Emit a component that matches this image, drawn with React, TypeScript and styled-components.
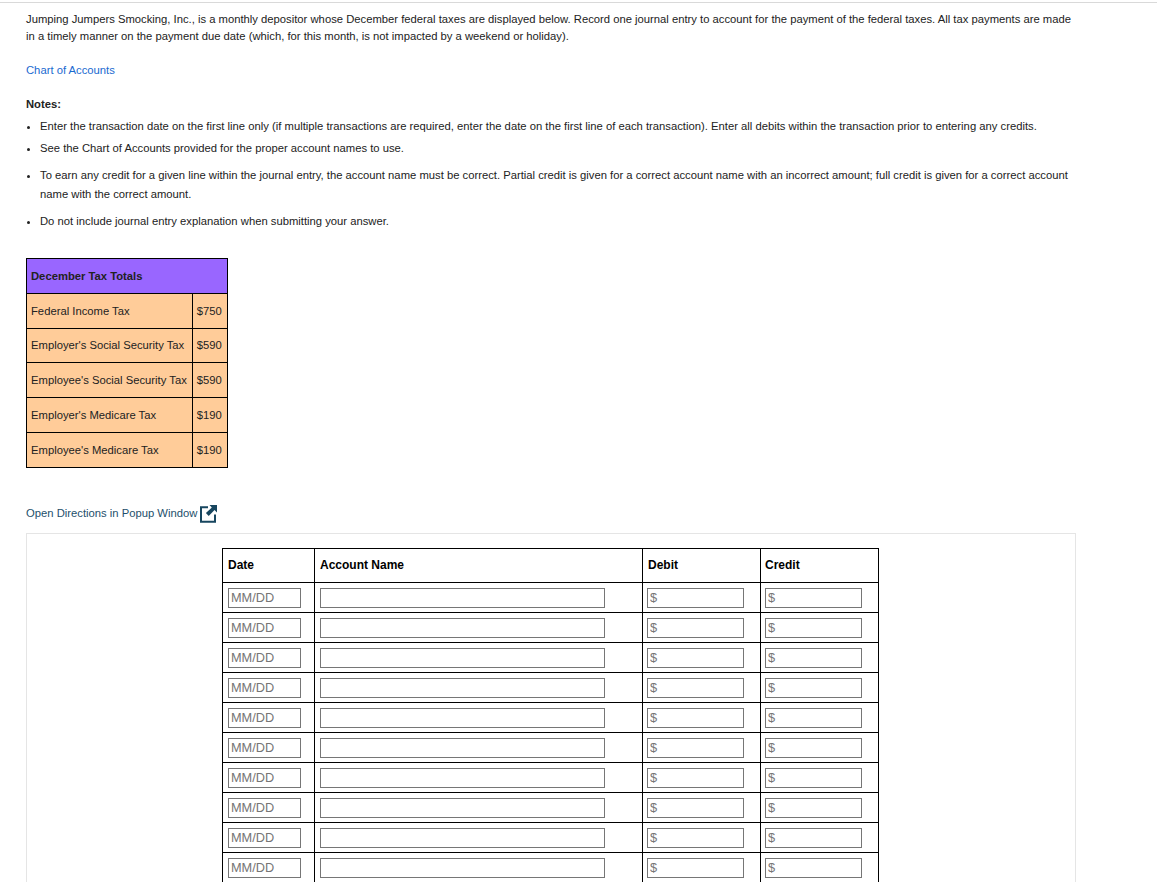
import React from 'react'
import styled, { createGlobalStyle } from 'styled-components'

const taxes = [
  { name: 'Federal Income Tax', amount: '$750' },
  { name: "Employer's Social Security Tax", amount: '$590' },
  { name: "Employee's Social Security Tax", amount: '$590' },
  { name: "Employer's Medicare Tax", amount: '$190' },
  { name: "Employee's Medicare Tax", amount: '$190' },
]

const rows = Array.from({ length: 12 }, (_, i) => i)

const PopupIcon = () => (
  <svg width="17" height="19" viewBox="0 0 17 19" aria-hidden="true">
    <path d="M8 3.2H1v14.6h14V10.5" fill="none" stroke="#17465f" strokeWidth="2" />
    <path d="M9.5 1H17v7.5l-2.5-2.5-5.8 5.9-2.8-2.8L11.8 3.6z" fill="#17465f" />
  </svg>
)

const App = () => {
  return (
    <Page>
      <GlobalStyle />
      <Paragraph>
        Jumping Jumpers Smocking, Inc., is a monthly depositor whose December federal taxes are
        displayed below. Record one journal entry to account for the payment of the federal taxes.
        All tax payments are made in a timely manner on the payment due date (which, for this month,
        is not impacted by a weekend or holiday).
      </Paragraph>
      <ChartLink href="#">Chart of Accounts</ChartLink>
      <NotesTitle>Notes:</NotesTitle>
      <Notes>
        <Note $gap={5} $lead={17}>
          Enter the transaction date on the first line only (if multiple transactions are required,
          enter the date on the first line of each transaction). Enter all debits within the
          transaction prior to entering any credits.
        </Note>
        <Note $gap={5} $lead={17}>
          See the Chart of Accounts provided for the proper account names to use.
        </Note>
        <Note $gap={9} $lead={19}>
          To earn any credit for a given line within the journal entry, the account name must be
          correct. Partial credit is given for a correct account name with an incorrect amount; full
          credit is given for a correct account name with the correct amount.
        </Note>
        <Note $gap={9} $lead={17}>
          Do not include journal entry explanation when submitting your answer.
        </Note>
      </Notes>
      <TaxTable>
        <tbody>
          <tr>
            <TaxHead colSpan={2}>December Tax Totals</TaxHead>
          </tr>
          {taxes.map((t) => (
            <tr key={t.name}>
              <TaxCell>{t.name}</TaxCell>
              <TaxCell>{t.amount}</TaxCell>
            </tr>
          ))}
        </tbody>
      </TaxTable>
      <PopupLink href="#">
        Open Directions in Popup Window
        <PopupIcon />
      </PopupLink>
      <Card>
        <Journal>
          <thead>
            <tr>
              <JournalHead $width={92} $inset={5}>Date</JournalHead>
              <JournalHead $width={328} $inset={5}>Account Name</JournalHead>
              <JournalHead $width={118} $inset={5}>Debit</JournalHead>
              <JournalHead $width={118} $inset={4}>Credit</JournalHead>
            </tr>
          </thead>
          <tbody>
            {rows.map((r) => (
              <tr key={r}>
                <JournalCell $inset={5}>
                  <Field $width={73} placeholder="MM/DD" />
                </JournalCell>
                <JournalCell $inset={5}>
                  <Field $width={285} />
                </JournalCell>
                <JournalCell $inset={4}>
                  <Field $width={97} placeholder="$" />
                </JournalCell>
                <JournalCell $inset={4}>
                  <Field $width={97} placeholder="$" />
                </JournalCell>
              </tr>
            ))}
          </tbody>
        </Journal>
      </Card>
    </Page>
  )
}

export default App

const GlobalStyle = createGlobalStyle`
  html, body {
    margin: 0;
    height: 882px;
    overflow: hidden;
    background: #fff;
  }
`

const Page = styled.div`
  width: 1157px;
  box-sizing: border-box;
  border-top: 1px solid #d9d9d9;
  margin-top: 2px;
  padding: 8px 81px 0 26px;
  font-family: 'Liberation Sans', Arial, sans-serif;
  font-size: 11.25px;
  line-height: 17px;
  color: #222;
`

const Paragraph = styled.p`
  margin: 0;
`

const ChartLink = styled.a`
  display: block;
  margin-top: 17px;
  color: #1a6ad0;
  text-decoration: none;
`

const NotesTitle = styled.div`
  margin-top: 17px;
  font-weight: bold;
`

const Notes = styled.ul`
  margin: 5px 0 0;
  padding: 0 0 0 14px;
`

const Note = styled.li<{ $gap: number; $lead: number }>`
  margin-top: ${({ $gap }) => $gap}px;
  line-height: ${({ $lead }) => $lead}px;
`

const TaxTable = styled.table`
  margin-top: 28px;
  border-collapse: collapse;
  background: #ffcc99;
`

const TaxHead = styled.td`
  height: 34.8px;
  box-sizing: border-box;
  padding: 1px 4px 0;
  border: 1px solid #000;
  background: #9966ff;
  font-weight: bold;
`

const TaxCell = styled.td`
  height: 34.8px;
  box-sizing: border-box;
  padding: 1px 5px 0 4px;
  border: 1px solid #000;
  white-space: nowrap;
`

const PopupLink = styled.a`
  display: flex;
  align-items: center;
  gap: 3px;
  margin-top: 36px;
  color: #1d4f6b;
  text-decoration: none;
`

const Card = styled.div`
  margin-top: 10px;
  width: 1050px;
  box-sizing: border-box;
  border: 1px solid #e5e5e5;
  padding: 14px 0 0 195px;
`

const Journal = styled.table`
  border-collapse: collapse;
  table-layout: fixed;
  width: 657px;
  color: #000;
`

const JournalHead = styled.th<{ $width: number; $inset: number }>`
  width: ${({ $width }) => $width}px;
  height: 34px;
  box-sizing: border-box;
  padding: 0 5px 0 ${({ $inset }) => $inset}px;
  border: 1px solid #000;
  text-align: left;
  font-size: 12px;
  font-weight: bold;
`

const JournalCell = styled.td<{ $inset: number }>`
  height: 30px;
  box-sizing: border-box;
  padding: 5px 5px 4px ${({ $inset }) => $inset}px;
  border: 1px solid #000;
`

const Field = styled.input<{ $width: number }>`
  display: block;
  width: ${({ $width }) => $width}px;
  height: 20px;
  box-sizing: border-box;
  padding: 1px 2px;
  border: 1px solid #767676;
  background: #fff;
  font-family: 'Liberation Sans', Arial, sans-serif;
  font-size: 12.75px;
  border-radius: 0;
  outline: none;

  &::placeholder {
    color: #757575;
    opacity: 1;
  }
`
